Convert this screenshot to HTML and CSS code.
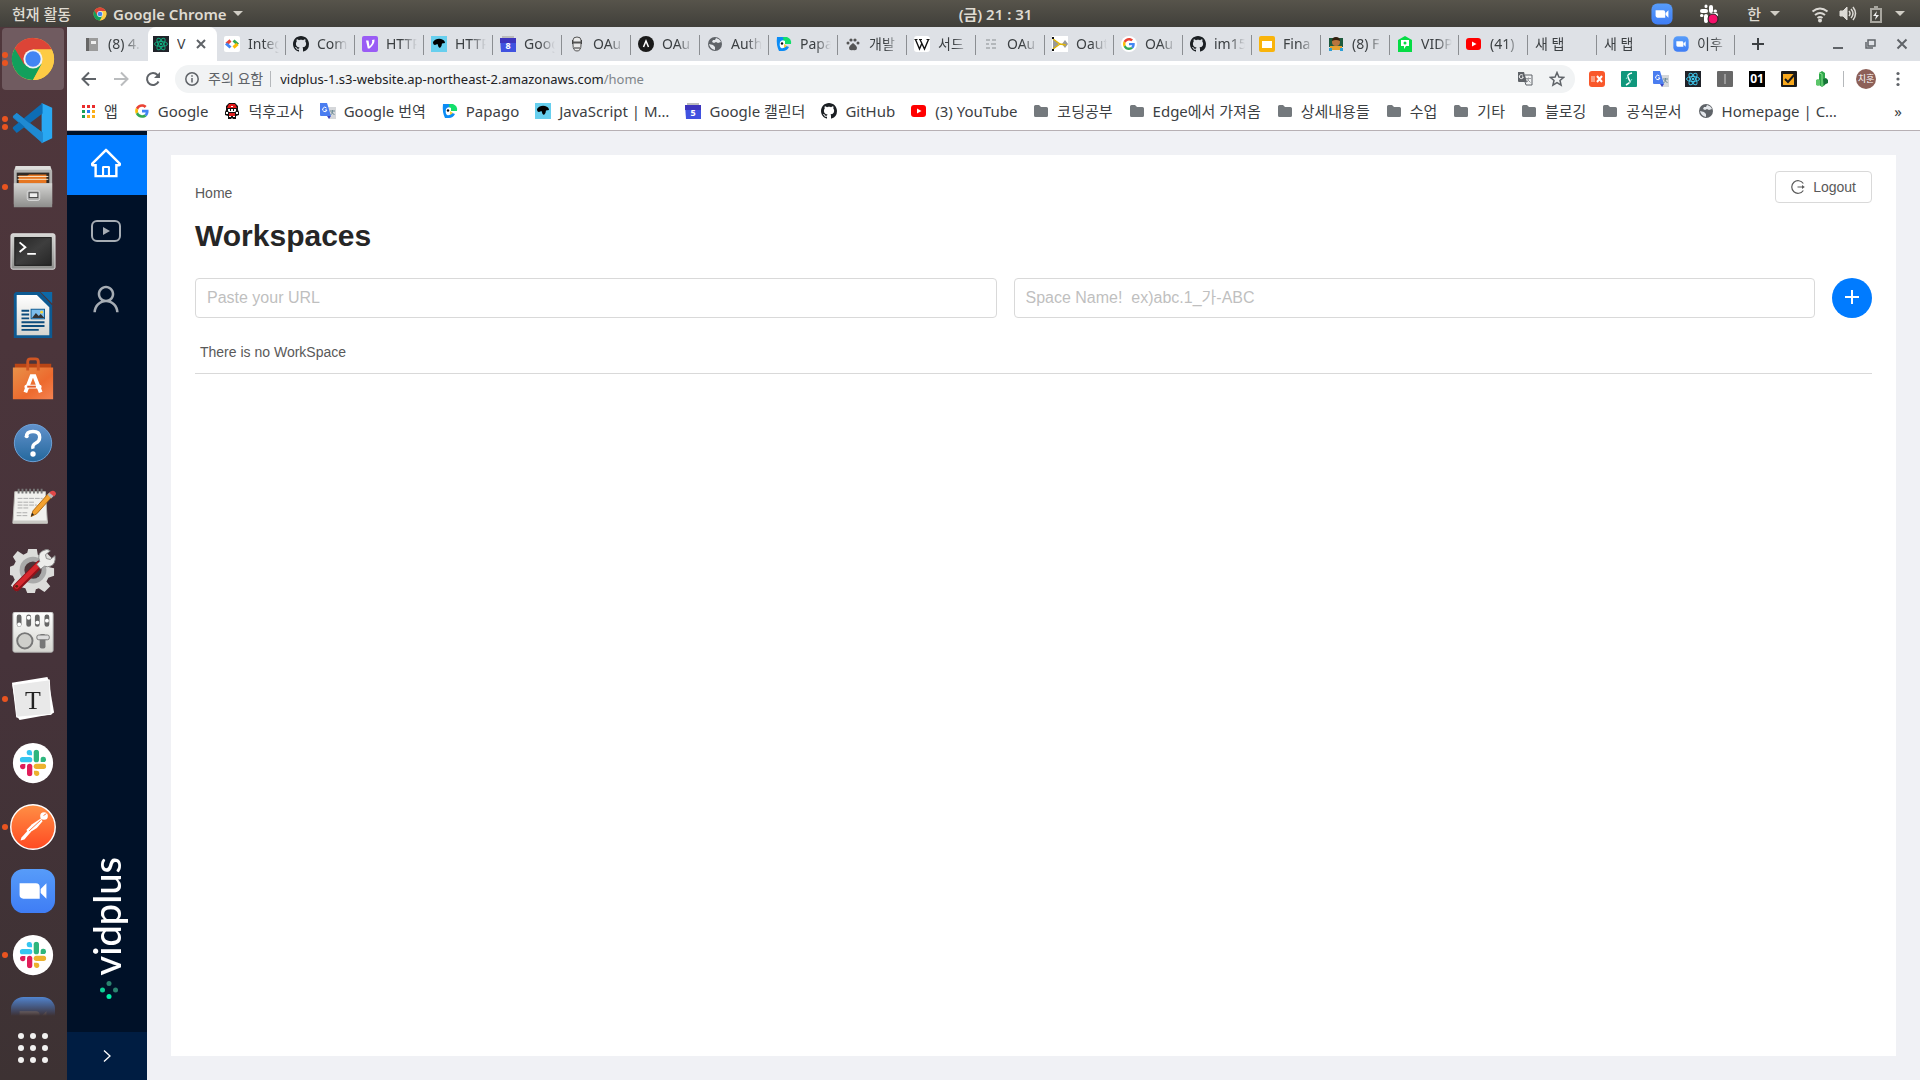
FILE: index.html
```html
<!DOCTYPE html>
<html lang="ko">
<head>
<meta charset="utf-8">
<meta name="viewport" content="width=device-width, initial-scale=1">
<title>Vidplus</title>
<link rel="stylesheet" href="styles.css">
</head>
<body>
<svg class="sprite" aria-hidden="true">
  <defs>
    <linearGradient id="g-zoom" x1="0" y1="0" x2="0" y2="1"><stop offset="0" stop-color="#579cf9"/><stop offset="1" stop-color="#3f7df5"/></linearGradient>
    <linearGradient id="g-postman" x1="0" y1="0" x2="0" y2="1"><stop offset="0" stop-color="#ff8f45"/><stop offset="1" stop-color="#ff4a22"/></linearGradient>
    <linearGradient id="g-metal" x1="0" y1="0" x2="0" y2="1"><stop offset="0" stop-color="#d6d6d4"/><stop offset="1" stop-color="#8e8e8c"/></linearGradient>
    <linearGradient id="g-paper" x1="0" y1="0" x2="0" y2="1"><stop offset="0" stop-color="#ffffff"/><stop offset="1" stop-color="#d5d5d0"/></linearGradient>
    <linearGradient id="g-bag" x1="0" y1="0" x2="1" y2="1"><stop offset="0" stop-color="#e89149"/><stop offset=".6" stop-color="#ed6a2e"/><stop offset="1" stop-color="#f58352"/></linearGradient>
    <linearGradient id="g-help" x1="0" y1="0" x2="0" y2="1"><stop offset="0" stop-color="#6292cc"/><stop offset="1" stop-color="#24689d"/></linearGradient>
    <linearGradient id="g-term" x1="0" y1="0" x2="1" y2="1"><stop offset="0" stop-color="#252525"/><stop offset=".5" stop-color="#3e3e3e"/><stop offset="1" stop-color="#262626"/></linearGradient>
  </defs>
  <symbol id="chrome" viewBox="0 0 48 48">
    <circle cx="24" cy="24" r="22" fill="#fdcb45"/>
    <path d="M24 24 4.900 13A22 22 0 0 0 24 46L33.500 29.500Z" fill="#12a05c"/>
    <path d="M24 14H43.600A22 22 0 0 0 4.900 13L15 30Z" fill="#dc4437"/>
    <path d="M24 14H43.600A22 22 0 0 1 24 46L33 29Z" fill="#fdcb45"/>
    <circle cx="24" cy="24" r="10" fill="#f2f2f2"/><circle cx="24" cy="24" r="8" fill="#4285f4"/>
  </symbol>
  <symbol id="vscode" viewBox="0 0 48 48">
    <path d="M33 3 44 8V40L33 45Z" fill="#29a8f2"/>
    <path d="M3 17 7 13.500 34 34V45L3 18.500Z" fill="#1b80c8"/>
    <path d="M3 30 7 34.500 34 14V3L3 28.500Z" fill="#0d6db4"/>
    <path d="M3 17 7 13.500 20 24 34 34V45Z" fill="#1f8ad2"/>
  </symbol>
  <symbol id="files" viewBox="0 0 48 48">
    <path d="M6 2H42L44 7V42H4V7Z" fill="#b3b3b1"/><path d="M6 2H42L43 6H5Z" fill="#dededc"/>
    <rect x="7" y="9" width="34" height="11" fill="#2f2b28"/><path d="M9 12h9l2-1h18v9H9Z" fill="#e57621"/><path d="M8 13h32M8 16h32" stroke="#f7e7cf"/>
    <path d="M4 20H44V45H4Z" fill="url(#g-metal)"/><rect x="18" y="28" width="13" height="10" rx="2" fill="#aaa" stroke="#ddd"/><rect x="20" y="30" width="9" height="5" fill="#eee" stroke="#444"/>
  </symbol>
  <symbol id="terminal" viewBox="0 0 48 48">
    <rect x="1" y="6" width="46" height="37" rx="2" fill="url(#g-metal)" stroke="#e0e0e0"/><rect x="5" y="10" width="38" height="29" fill="url(#g-term)" stroke="#1b1b1b"/>
    <path d="m10 15 6 5-6 5M18 27h9" fill="none" stroke="#fff" stroke-width="2"/>
  </symbol>
  <symbol id="writer" viewBox="0 0 48 48">
    <path d="M6 0H31L44 14V48H4V2Z" fill="#0d5a92"/><path d="M32 0H44V12Z" fill="#0d69a8"/>
    <path d="M7 3H28L41 16V45H7Z" fill="url(#g-paper)"/>
    <path d="M12 19.500h8m-8 4h8m-8 4h8m-8 4h24m-24 4h24m-24 4h18" stroke="#0d4c7c" stroke-width="2"/>
    <rect x="22" y="18" width="14" height="10" fill="#7cbdeb" stroke="#0d5a92"/><path d="m23 27 4-5 3 3 2-2 4 4Z" fill="#333"/><circle cx="33" cy="21" r="1.500" fill="#f5d33b"/>
  </symbol>
  <symbol id="software" viewBox="0 0 48 48">
    <path d="M5 8H43V14H5Z" fill="#b94515"/><path d="M3 12H45V45H3Z" fill="url(#g-bag)"/>
    <path d="M18.500 15V6q0-3 3-3h5q3 0 3 3v9" fill="none" stroke="#cf5624" stroke-width="3"/>
    <path d="M16 38 22.500 21h3L32 38" fill="none" stroke="#fff" stroke-width="4"/><rect x="15" y="30" width="18" height="4" rx="2" fill="#fff"/><path d="M18 32h9" stroke="#e35b25" stroke-width="2"/>
  </symbol>
  <symbol id="help" viewBox="0 0 48 48">
    <circle cx="24" cy="24" r="19.500" fill="url(#g-help)" stroke="#6fa3d8"/>
    <path d="M17 18q0-6 7-6t7 6q0 4-4 6t-3 6" fill="none" stroke="#fff" stroke-width="3.500"/><circle cx="17.500" cy="17" r="2" fill="#fff"/><circle cx="24" cy="35.500" r="2.800" fill="#fff"/>
  </symbol>
  <symbol id="notes" viewBox="0 0 48 48">
    <path d="M5 8H37L39 41H3Z" fill="#f1f1ee" stroke="#bdbdb8"/><path d="M3 38H39V41H3Z" fill="#c9c9c4"/>
    <path d="M9 5v5m4-5v5m4-5v5m4-5v5m4-5v5m4-5v5m4-5v5" stroke="#777" stroke-width="2"/>
    <path d="M8 15h26M8 19h18M8 22h20M8 25h12M7 30h12M7 33h12" stroke="#aaa" stroke-dasharray="5 1"/>
    <path d="m22 34 2-6L40 10l4 3-16 18Z" fill="#f3a22f" stroke="#b06a12"/><path d="m39 11 3-3 4 4-3 3Z" fill="#b8b8b8"/><path d="m42 8q3-2 5 0t0 4l-1 1-5-4Z" fill="#e04848"/><path d="m22 34 1-4 2 2Z" fill="#222"/>
  </symbol>
  <symbol id="settings" viewBox="0 1 48 48">
    <path d="m19 2h9l1 6 4 2 5-4 6 6-4 6 1 3 5 1v8l-6 2-2 4 4 5-6 6-6-4-3 1-1 4h-8l-2-5-4-1-5 4-6-6 4-6-2-4-4-1v-8l5-2 2-4-3-5 5-6 6 4 4-2Z" fill="#dcdcda"/>
    <circle cx="24" cy="24" r="14" fill="#aaa"/><circle cx="24" cy="24" r="9" fill="#4b3539"/>
    <path d="m7 42 24-24" stroke="#8f1219" stroke-width="8" stroke-linecap="round"/><path d="m7 41 23-23" stroke="#d6282e" stroke-width="5" stroke-linecap="round"/>
    <path d="m28 18 3-3q-3-8 3-11 5-3 8 0l-5 4 1 4 4 1 5-4q1 9-5 11-3 1-6 0l-4 3Z" fill="#ededeb" stroke="#888"/><circle cx="7" cy="41" r="1.500" fill="#521"/>
  </symbol>
  <symbol id="tweaks" viewBox="0 3 48 48" overflow="visible">
    <rect x="3" y="3" width="42" height="42" rx="2" fill="url(#g-paper)" stroke="#aaa"/>
    <path d="M9.500 8v8m10-8v8m9-8v8m10-8v8" stroke="#666" stroke-width="5" stroke-linecap="round"/>
    <path d="M9.500 16h.1m9.900-7h.1m8.900 5h.1m9.900-2h.1" stroke="#fff" stroke-width="4" stroke-linecap="round"/>
    <circle cx="15.500" cy="33" r="8" fill="#cfcfcb" stroke="#777" stroke-width="2"/><rect x="31" y="26" width="6" height="15" rx="2" fill="#777"/><rect x="28" y="27" width="13" height="5" rx="2" fill="#ddd" stroke="#777"/>
  </symbol>
  <symbol id="typora" viewBox="0 0 48 48">
    <path d="m2 7 37-6 1 3 6 34-3 2-33 6-2-3Z" fill="#fff"/><path d="M3 9 41 4 43 40 7 43Z" fill="#e9e9e9" stroke="#fff"/>
    <text x="24" y="34" text-anchor="middle" font-family="Liberation Serif, serif" font-size="27" fill="#222">T</text>
  </symbol>
  <symbol id="slack-mark" viewBox="0 0 28 28">
    <g stroke-width="5.500" stroke-linecap="round"><path d="M3 10.500h7.500" stroke="#36c5f0"/><path d="M17.500 3v7.500" stroke="#2eb67d"/><path d="M17.500 17.500H25" stroke="#ecb22e"/><path d="M10.500 17.500V25" stroke="#e01e5a"/></g>
    <path d="M13 6H10.500A2.800 2.800 0 1 1 13 3Z" fill="#36c5f0"/><path d="M22 13v-2.500A2.800 2.800 0 1 1 25 13Z" fill="#2eb67d"/><path d="M15 22h2.500A2.800 2.800 0 1 1 15 25Z" fill="#ecb22e"/><path d="M6 15v2.500A2.800 2.800 0 1 1 3 15Z" fill="#e01e5a"/>
  </symbol>
  <symbol id="slack" viewBox="0 0 48 48"><circle cx="24" cy="24" r="21" fill="#fff"/><use href="#slack-mark" x="10" y="10" width="28" height="28"/></symbol>
  <symbol id="postman" viewBox="0 0 48 48">
    <circle cx="24" cy="24" r="23.200" fill="url(#g-postman)" stroke="#fff" stroke-width="1.500"/>
    <circle cx="35.500" cy="12.500" r="4" fill="#fff"/><path d="m32 15-9 6-6 6 3 3 8-5 6-7Z" fill="#fff"/><path d="m19 27-7 8-1 3 4-1 7-8Z" fill="#fff"/><path d="m20 28 12-11" stroke="#ff7038"/><path d="m35 12 3-2" stroke="#ff7038"/>
  </symbol>
  <symbol id="zoom" viewBox="0 0 48 48">
    <rect x="1" y="1" width="46" height="46" rx="13" fill="url(#g-zoom)"/><path d="M10 16H27q4 0 4 4V32H14q-4 0-4-4ZM32 22l6-6V32l-6-6Z" fill="#fff"/>
  </symbol>
  <symbol id="github" viewBox="0 0 16 16"><path fill="#1b1f23" d="M8 0C3.580 0 0 3.580 0 8c0 3.540 2.290 6.530 5.470 7.590.4.070.55-.17.55-.38 0-.19-.01-.82-.01-1.490-2.010.37-2.530-.49-2.690-.94-.09-.23-.48-.94-.82-1.130-.28-.15-.68-.52-.01-.53.63-.01 1.080.58 1.230.82.72 1.210 1.870.87 2.330.66.07-.52.28-.87.51-1.070-1.780-.2-3.640-.89-3.640-3.950 0-.87.31-1.590.82-2.150-.08-.2-.36-1.020.08-2.120 0 0 .67-.21 2.200.82.64-.18 1.320-.27 2-.27s1.360.09 2 .27c1.530-1.040 2.200-.82 2.200-.82.44 1.100.16 1.920.08 2.120.51.56.82 1.270.82 2.150 0 3.070-1.870 3.750-3.650 3.950.29.25.54.73.54 1.480 0 1.070-.01 1.930-.01 2.200 0 .21.15.46.55.38A8.010 8.010 0 0 0 16 8c0-4.420-3.580-8-8-8z"/></symbol>
  <symbol id="google" viewBox="-4 -4 56 56">
    <path fill="#ea4335" d="M24 9.500c3.540 0 6.710 1.220 9.210 3.600l6.850-6.850C35.900 2.380 30.470 0 24 0 14.620 0 6.510 5.380 2.560 13.220l7.980 6.190C12.430 13.720 17.740 9.500 24 9.500z"/><path fill="#4285f4" d="M46.980 24.550c0-1.570-.15-3.090-.38-4.550H24v9.020h12.940c-.58 2.960-2.260 5.480-4.780 7.180l7.730 6c4.510-4.180 7.090-10.360 7.090-17.650z"/><path fill="#fbbc05" d="M10.530 28.590c-.48-1.450-.76-2.990-.76-4.590s.27-3.140.76-4.590l-7.980-6.190C.92 16.460 0 20.120 0 24c0 3.880.92 7.540 2.560 10.780l7.970-6.190z"/><path fill="#34a853" d="M24 48c6.480 0 11.930-2.130 15.890-5.810l-7.730-6c-2.150 1.450-4.920 2.300-8.160 2.300-6.260 0-11.570-4.220-13.470-9.910l-7.980 6.190C6.510 42.620 14.620 48 24 48z"/>
  </symbol>
  <symbol id="google-tab" viewBox="0 0 16 16"><circle cx="8" cy="8" r="8" fill="#fff"/><use href="#google" x="1" y="1" width="14" height="14"/></symbol>
  <symbol id="atom" viewBox="0 0 16 16"><g fill="none" stroke="currentColor"><ellipse cx="8" cy="8" rx="6.500" ry="2.500"/><ellipse cx="8" cy="8" rx="6.500" ry="2.500" transform="rotate(60 8 8)"/><ellipse cx="8" cy="8" rx="6.500" ry="2.500" transform="rotate(120 8 8)"/></g><circle cx="8" cy="8" r="1.300" fill="currentColor"/></symbol>
  <symbol id="book" viewBox="0 0 16 16"><path d="M2 2h12v13H2Z" fill="#9b9b9b"/><path d="M2 2h3v13H2Z" fill="#666"/><path d="M7 5h5v3H7Z" fill="#eee"/></symbol>
  <symbol id="codecolor" viewBox="0 0 16 16"><rect width="16" height="16" rx="2" fill="#fff"/><path d="m6.500 4.500-4 3.500" stroke="#ea4335" stroke-width="3"/><path d="m2 7.500 4.500 4" stroke="#4285f4" stroke-width="3"/><path d="m9.500 4.500 4.500 4" stroke="#34a853" stroke-width="3"/><path d="m13.500 8-4 3.500" stroke="#fbbc05" stroke-width="3"/></symbol>
  <symbol id="velog" viewBox="0 0 16 16"><rect width="16" height="16" rx="2" fill="#9a5cf5"/><path d="M4 4.500h2.500l1 6Q11 7 10 4l2.500-.5Q13 8 7.500 12.500H5.800Z" fill="#fff"/></symbol>
  <symbol id="mdn" viewBox="0 0 16 16"><rect width="16" height="16" fill="#67cfee"/><path d="M2 6q3-4 8-3 4 1 4 4l-3 .5Q11 10 9 12q-2-1-2.500-4L4 9Q2 9 2 6Z" fill="#000"/></symbol>
  <symbol id="cal" viewBox="0 0 16 16"><path d="M2 0h12v2H2Z" fill="#bcbcbc"/><path d="M0 2h16v14H1Z" fill="#4052e0"/><path d="M0 2h16v5H0Z" fill="#3d35bd"/></symbol>
  <symbol id="robot" viewBox="0 0 16 16"><path d="M4 6V4q0-3 4-3t4 3v5q0 6-4 6T4 9Z" fill="#e9e9e9" stroke="#555"/><path d="M3 4h1v4H3Zm9 0h1v4h-1Z" fill="#444"/><path d="M4 6.500h8" stroke="#555" stroke-width="2"/><path d="M5 12h6" stroke="#333"/></symbol>
  <symbol id="authlete" viewBox="0 0 16 16"><circle cx="8" cy="8" r="8" fill="#1a1a1a"/><path d="m5.500 11 2.500-6 2.500 6" fill="none" stroke="#fff" stroke-width="1.500"/></symbol>
  <symbol id="globe" viewBox="0 0 16 16"><circle cx="8" cy="8" r="7" fill="#5f6368"/><path d="m2 8 4 1 2 2v3Q3 13 2 8ZM9 2q4 1 5 4l-3 1-2-1-2 1-2-1 1-2h2Z" fill="#e4e7eb"/></symbol>
  <symbol id="papago" viewBox="0 0 16 16"><path d="M1 1h7v8l5 2q-2 4-6 4H3Q0 9 1 1Z" fill="#0c8cf5"/><path d="M7 1h4q5 2 4 7H8Z" fill="#13df6b"/><path d="M4 6q2-3 5-1v5q-1 3-4 2-2-2-1-6" fill="#fff"/><circle cx="6" cy="7.500" r="1.200" fill="#111"/><path d="m8 8 3 2-3 2Z" fill="#fc3"/></symbol>
  <symbol id="paw" viewBox="0 0 16 16"><path d="M8 7q4 3 4 5 0 3-4 2-4 1-4-2 0-2 4-5" fill="#555"/><g fill="#555"><circle cx="3" cy="7" r="1.500"/><circle cx="6" cy="4" r="1.600"/><circle cx="10" cy="4" r="1.600"/><circle cx="13" cy="7" r="1.500"/></g></symbol>
  <symbol id="wiki" viewBox="0 0 16 16"><rect width="16" height="16" rx="3" fill="#fff"/><path d="m1.500 3.500 4 9.500 2.500-6m-2-3.500L10.500 13l4-9.500" fill="none" stroke="#111" stroke-width="1.400"/><path d="M.5 3.500h3m1.500 0h3m4.500 0h3" stroke="#111"/></symbol>
  <symbol id="lines" viewBox="0 0 16 16"><path d="M3 4h4m2 0h4M3 8h3m2 0h5M3 12h4m2 0h4" stroke="#a5a9ad" stroke-width="1.500"/></symbol>
  <symbol id="bow" viewBox="0 0 16 16"><rect width="16" height="16" fill="#fff"/><path d="M1 2 7 8 1 14Zm9 6 3-4 3 4-3 4Z" fill="#999"/><path d="m1 3 7 5 6 1M1 13l7-5" fill="none" stroke="#e0b50a" stroke-width="1.500"/><path d="M0 1h2v2H0ZM0 13h2v2H0Z" fill="#111"/></symbol>
  <symbol id="slides" viewBox="0 0 16 16"><rect width="16" height="16" rx="2" fill="#f9b40b"/><rect x="3" y="5" width="10" height="7" fill="#fff"/></symbol>
  <symbol id="coder" viewBox="0 0 16 16"><path d="M1 2h14v9H1Z" fill="#1d5a3d"/><circle cx="8" cy="6" r="4" fill="#b8743c"/><path d="M4 5q0-4 4-4t4 4Q8 3 4 5" fill="#35200f"/><path d="M2 10h12v4H2Z" fill="#e2a12f"/><path d="M1 12h3v3H1Zm11 0h3v3h-3Z" fill="#2a9fd6"/></symbol>
  <symbol id="pin" viewBox="0 0 16 16"><path d="M1 4 8 0l7 4v12H1Z" fill="#06dc45"/><path d="M4 4h8v6H9l-2 3V10H4Z" fill="#fff"/><circle cx="8" cy="7" r="1.500" fill="#06dc45"/></symbol>
  <symbol id="youtube" viewBox="0 0 16 16"><rect x="0" y="2" width="15" height="12" rx="3" fill="#f00"/><path d="m6 5.500 4.500 2.500L6 10.500Z" fill="#fff"/></symbol>
  <symbol id="trainer" viewBox="0 0 16 16"><path d="M5 0h6l3 3v4l1 2v3l-3 1v3H9l-1-1-1 1H4v-3l-3-1V9l1-2V3Z" fill="#111"/><path d="M5 1h6l2 4H3Z" fill="#e51a1a"/><path d="M4 6h8v2l-1 1H5L4 8Z" fill="#fff"/><path d="M6 6h1v2H6Zm3 0h1v2H9Z" fill="#111"/><path d="M5 10h6v3H5Z" fill="#d22"/><path d="M2 9h2v2H2Zm10 0h2v2h-2ZM7 3h2v1H7ZM5 13h2v1H5Zm4 0h2v1H9Z" fill="#fff"/></symbol>
  <symbol id="translate" viewBox="0 0 16 16"><path d="M7 4h9v12H9Z" fill="#d5d7da"/><path d="M0 0h7l4 13H1q-1 0-1-1Z" fill="#4a7df0"/><path d="M7 13h4l-2 3Z" fill="#3b46c4"/><path d="M6.500 5A2.200 2.200 0 1 0 7 7H5" fill="none" stroke="#fff"/><path d="M10 8h5m-2.500-1v1q0 3-2 4m1-3 3 3" fill="none" stroke="#6d8b96"/></symbol>
  <symbol id="folder" viewBox="0 0 16 16"><path d="M1 3.500Q1 2 2.500 2H6l2 2h5.500Q15 4 15 5.500v7q0 1.500-1.500 1.500h-11Q1 14 1 12.500Z" fill="#74797d"/></symbol>
  <symbol id="apps" viewBox="0 0 16 16"><path d="M2 2h3v3H2Zm5 0h3v3H7Zm5 0h3v3h-3Z" fill="#ea2c2c"/><path d="M2 7h3v3H2Z" fill="#19a157"/><path d="M7 7h3v3H7Z" fill="#2a7df5"/><path d="M12 7h3v3h-3ZM12 12h3v3h-3ZM7 12h3v3H7Z" fill="#fbae17"/><path d="M2 12h3v3H2Z" fill="#19a157"/></symbol>
</svg>

<header class="topbar">
  <button class="activities">현재 활동</button>
  <button class="app-menu"><svg class="i14"><use href="#chrome"/></svg>Google Chrome<span class="caret"></span></button>
  <time class="clock">(금) 21 : 31</time>
  <div class="tray">
    <svg class="i22"><use href="#zoom"/></svg>
    <svg class="i22 tray-slack" viewBox="0 0 22 22"><g stroke="#fff" stroke-width="4" stroke-linecap="round"><path d="M4 8h4M13 4v4M14 12h4M8 13v5"/></g><path d="M8 3v.5m9 4.500h.5M3.500 12.500H4" stroke="#fff" stroke-width="3" stroke-linecap="round"/><circle cx="15" cy="16" r="5" fill="#f5106a" stroke="#222"/></svg>
    <button class="ime">한<span class="caret"></span></button>
    <div class="status">
      <svg class="i18" viewBox="0 0 18 18" fill="none" stroke="#dcdad5" stroke-width="2"><path d="M1.500 6.500q7.500-6 15 0M4 10q5-4 10 0M6.500 13q2.500-2 5 0"/><circle cx="9" cy="15.500" r="1" fill="#dcdad5"/></svg>
      <svg class="i18" viewBox="0 0 18 18" fill="none" stroke="#dcdad5"><path d="M1 6h3l4-4v13l-4-4H1Z" fill="#dcdad5"/><path d="M10 6q2 2.500 0 5M12 4q4 4.500 0 9M14 2q5 6.500 0 13" stroke-width="1.500"/></svg>
      <svg class="i18" viewBox="0 0 18 18" fill="none" stroke="#a8a69f" stroke-width="2"><path d="M4 4h10v13H4ZM7 2h4"/><path d="m10 6-4 5h3l-1 4 4-5H9Z" fill="#eee" stroke="none"/></svg>
      <span class="caret"></span>
    </div>
  </div>
</header>

<div class="desktop">
  <nav class="dock" aria-label="Dock">
    <div class="dock-list">
      <button class="dock-item current two" aria-label="Chrome"><svg><use href="#chrome"/></svg></button>
      <button class="dock-item two" aria-label="Code"><svg><use href="#vscode"/></svg></button>
      <button class="dock-item one" aria-label="Files"><svg><use href="#files"/></svg></button>
      <button class="dock-item" aria-label="Terminal"><svg><use href="#terminal"/></svg></button>
      <button class="dock-item" aria-label="Writer"><svg><use href="#writer"/></svg></button>
      <button class="dock-item" aria-label="Software"><svg><use href="#software"/></svg></button>
      <button class="dock-item" aria-label="Help"><svg><use href="#help"/></svg></button>
      <button class="dock-item" aria-label="Notes"><svg><use href="#notes"/></svg></button>
      <button class="dock-item" aria-label="Settings"><svg><use href="#settings"/></svg></button>
      <button class="dock-item" aria-label="Tweaks"><svg><use href="#tweaks"/></svg></button>
      <button class="dock-item one" aria-label="Typora"><svg><use href="#typora"/></svg></button>
      <button class="dock-item" aria-label="Slack"><svg><use href="#slack"/></svg></button>
      <button class="dock-item one" aria-label="Postman"><svg><use href="#postman"/></svg></button>
      <button class="dock-item" aria-label="Zoom"><svg><use href="#zoom"/></svg></button>
      <button class="dock-item one" aria-label="Slack"><svg><use href="#slack"/></svg></button>
      <button class="dock-item" aria-label="Zoom"><svg><use href="#zoom"/></svg></button>
    </div>
    <button class="show-apps" aria-label="Show applications"><svg viewBox="0 0 32 32" fill="#f2f1f0"><circle cx="4" cy="4" r="3"/><circle cx="16" cy="4" r="3"/><circle cx="28" cy="4" r="3"/><circle cx="4" cy="16" r="3"/><circle cx="16" cy="16" r="3"/><circle cx="28" cy="16" r="3"/><circle cx="4" cy="28" r="3"/><circle cx="16" cy="28" r="3"/><circle cx="28" cy="28" r="3"/></svg></button>
  </nav>

  <div class="browser">
    <div class="tabstrip">
      <button class="tab plain"><svg class="i16"><use href="#book"/></svg><span>(8) 4.</span></button>
      <button class="tab active"><svg class="i16 react"><use href="#atom"/></svg><span>V</span><svg class="close" viewBox="0 0 10 10"><path d="m1 1 8 8M9 1 1 9" stroke="#5f6368" stroke-width="2"/></svg></button>
      <button class="tab"><svg class="i16"><use href="#codecolor"/></svg><span>Integ</span></button>
      <button class="tab"><svg class="i16"><use href="#github"/></svg><span>Com</span></button>
      <button class="tab"><svg class="i16"><use href="#velog"/></svg><span>HTTP</span></button>
      <button class="tab"><svg class="i16"><use href="#mdn"/></svg><span>HTTP</span></button>
      <button class="tab"><svg class="i16"><use href="#cal"/><text class="day" x="8" y="13">8</text></svg><span>Goog</span></button>
      <button class="tab"><svg class="i16"><use href="#robot"/></svg><span>OAu</span></button>
      <button class="tab"><svg class="i16"><use href="#authlete"/></svg><span>OAu</span></button>
      <button class="tab"><svg class="i16"><use href="#globe"/></svg><span>Auth</span></button>
      <button class="tab"><svg class="i16"><use href="#papago"/></svg><span>Papa</span></button>
      <button class="tab"><svg class="i16"><use href="#paw"/></svg><span>개발</span></button>
      <button class="tab"><svg class="i16"><use href="#wiki"/></svg><span>서드</span></button>
      <button class="tab"><svg class="i16"><use href="#lines"/></svg><span>OAu</span></button>
      <button class="tab"><svg class="i16"><use href="#bow"/></svg><span>Oaut</span></button>
      <button class="tab"><svg class="i16"><use href="#google-tab"/></svg><span>OAu</span></button>
      <button class="tab"><svg class="i16"><use href="#github"/></svg><span>im15</span></button>
      <button class="tab"><svg class="i16"><use href="#slides"/></svg><span>Fina</span></button>
      <button class="tab"><svg class="i16"><use href="#coder"/></svg><span>(8) F</span></button>
      <button class="tab"><svg class="i16"><use href="#pin"/></svg><span>VIDP</span></button>
      <button class="tab"><svg class="i16"><use href="#youtube"/></svg><span>(41)</span></button>
      <button class="tab"><span>새 탭</span></button>
      <button class="tab"><span>새 탭</span></button>
      <button class="tab"><svg class="i16"><use href="#zoom"/></svg><span>이후</span></button>
      <button class="new-tab" aria-label="New tab"><svg class="i12" viewBox="0 0 12 12"><path d="M6 0v12M0 6h12" stroke="#3c4043" stroke-width="2"/></svg></button>
      <div class="window-controls">
        <button aria-label="Minimize"><svg class="i12" viewBox="0 0 12 12"><path d="M1 10h10" stroke="#5f6368" stroke-width="2"/></svg></button>
        <button aria-label="Restore"><svg class="i12" viewBox="0 0 12 12" fill="none" stroke="#5f6368" stroke-width="1.500"><path d="M4 2h7v6H4ZM2 4v6h7"/></svg></button>
        <button aria-label="Close"><svg class="i12" viewBox="0 0 12 12"><path d="m1.500 1.500 9 9m0-9-9 9" stroke="#5f6368" stroke-width="2"/></svg></button>
      </div>
    </div>

    <div class="toolbar">
      <button aria-label="Back"><svg class="i16" viewBox="0 0 16 16" fill="none" stroke="#5f6368" stroke-width="2"><path d="M15 8H2m6-6.500L1.500 8 8 14.500"/></svg></button>
      <button aria-label="Forward"><svg class="i16" viewBox="0 0 16 16" fill="none" stroke="#babcbe" stroke-width="2"><path d="M1 8h13M8 1.500 14.500 8 8 14.500"/></svg></button>
      <button aria-label="Reload"><svg class="i16" viewBox="0 0 16 16" fill="none" stroke="#5f6368" stroke-width="2"><path d="M13.500 10.500A6 6 0 1 1 12.500 4L14 5.500"/><path d="M15 1v6H9Z" fill="#5f6368" stroke="none"/></svg></button>
      <div class="omnibox">
        <svg class="i14" viewBox="0 0 14 14" fill="none" stroke="#5f6368" stroke-width="1.500"><circle cx="7" cy="7" r="6.200"/><path d="M7 6v4.500M7 3.200v1.500"/></svg>
        <span class="warning">주의 요함</span>
        <span class="rule"></span>
        <input class="url" aria-label="Address" value="vidplus-1.s3-website.ap-northeast-2.amazonaws.com"><span class="path">/home</span>
        <span class="omni-actions">
          <svg class="i16" viewBox="0 0 16 16"><path d="M1 1h6l3 10H2q-1 0-1-1Z" fill="#5f6368"/><path d="M8 4h7v10H9l-1-3" fill="none" stroke="#5f6368"/><path d="M9 7.500h5m-2.500-1v1q0 3-2 4m1-3 3 3" fill="none" stroke="#9a9da1"/><path d="M6 4.500A2 2 0 1 0 6.300 6H5" fill="none" stroke="#fff"/></svg>
          <svg class="i16" viewBox="0 0 16 16"><path d="m8 1.500 1.900 4.500 4.700.4-3.600 3.100 1.100 4.700L8 11.700l-4.100 2.500L5 9.500 1.400 6.400 6.100 6Z" fill="none" stroke="#5f6368" stroke-width="1.500"/></svg>
        </span>
      </div>
      <div class="extensions">
        <svg class="i16" viewBox="0 0 16 16"><rect width="16" height="16" rx="3" fill="#f9582b"/><path d="M3 5v6M5 5v6" stroke="#fcb39a" stroke-width="1.500"/><path d="m8 5 5 6m0-6-5 6" stroke="#fff" stroke-width="2"/></svg>
        <svg class="i16" viewBox="0 0 16 16"><rect width="16" height="16" rx="1" fill="#10977c"/><path d="M11 2Q6 3 7 6t2 4-4 4" fill="none" stroke="#fff" stroke-width="1.500"/><path d="m5 8 3-4M8 12l3-4" stroke="#7ee0cb"/></svg>
        <svg class="i16"><use href="#translate"/></svg>
        <svg class="i16 react-blue"><use href="#atom"/></svg>
        <svg class="i16" viewBox="0 0 16 16"><rect width="16" height="16" rx="1" fill="#686868"/><path d="M8 3v10" stroke="#ccc"/></svg>
        <svg class="i16" viewBox="0 0 16 16"><rect width="16" height="16" fill="#000"/><text class="badge-01" x="8" y="12">01</text></svg>
        <svg class="i16" viewBox="0 0 16 16"><rect width="16" height="16" rx="1" fill="#1a1a1a"/><rect x="2" y="3" width="11" height="11" fill="#f8a81c"/><path d="m4 8 3 3 7-8" fill="none" stroke="#1a1a1a" stroke-width="2"/></svg>
        <svg class="i16" viewBox="0 0 16 16"><path d="m6 2 3-2 3 2v12l-3 2-3-2Z" fill="#2fa84b"/><path d="m3 9 2-1 2 1v5l-2 1-2-1Z" fill="#5cc56a"/><path d="M10 8l3-1 2 2v3l-4 2Z" fill="#167238"/><path d="m6 2 3 1v12" stroke="#8be08f" fill="none"/></svg>
        <span class="rule"></span>
        <button class="avatar">치훈</button>
        <button class="more" aria-label="Menu"><svg class="i16" viewBox="0 0 16 16" fill="#5f6368"><circle cx="8" cy="2.500" r="1.600"/><circle cx="8" cy="8" r="1.600"/><circle cx="8" cy="13.500" r="1.600"/></svg></button>
      </div>
    </div>

    <nav class="bookmarks" aria-label="Bookmarks">
      <a href="#"><svg class="i16"><use href="#apps"/></svg>앱</a>
      <a href="#"><svg class="i16"><use href="#google"/></svg>Google</a>
      <a href="#"><svg class="i16"><use href="#trainer"/></svg>덕후고사</a>
      <a href="#"><svg class="i16"><use href="#translate"/></svg>Google 번역</a>
      <a href="#"><svg class="i16"><use href="#papago"/></svg>Papago</a>
      <a href="#"><svg class="i16"><use href="#mdn"/></svg>JavaScript | M…</a>
      <a href="#"><svg class="i16"><use href="#cal"/><text class="day" x="8" y="13">5</text></svg>Google 캘린더</a>
      <a href="#"><svg class="i16"><use href="#github"/></svg>GitHub</a>
      <a href="#"><svg class="i16"><use href="#youtube"/></svg>(3) YouTube</a>
      <a href="#"><svg class="i16"><use href="#folder"/></svg>코딩공부</a>
      <a href="#"><svg class="i16"><use href="#folder"/></svg>Edge에서 가져옴</a>
      <a href="#"><svg class="i16"><use href="#folder"/></svg>상세내용들</a>
      <a href="#"><svg class="i16"><use href="#folder"/></svg>수업</a>
      <a href="#"><svg class="i16"><use href="#folder"/></svg>기타</a>
      <a href="#"><svg class="i16"><use href="#folder"/></svg>블로깅</a>
      <a href="#"><svg class="i16"><use href="#folder"/></svg>공식문서</a>
      <a href="#"><svg class="i16"><use href="#globe"/></svg>Homepage | C…</a>
      <button class="overflow">»</button>
    </nav>

    <div class="app">
      <aside class="sider">
        <nav class="menu" aria-label="Main">
          <a class="menu-item selected" href="#" aria-label="Home"><svg viewBox="64 64 896 896" fill="currentColor"><path d="M946.500 505L560.100 118.800l-25.900-25.900a31.500 31.500 0 0 0-44.400 0L77.500 505a63.900 63.900 0 0 0-18.800 46c.4 35.200 29.700 63.300 64.900 63.300h42.500V940h691.800V614.300h43.400c17.100 0 33.200-6.700 45.300-18.800a63.600 63.600 0 0 0 18.700-45.300c0-17-6.700-33.100-18.800-45.200zM568 868H456V664h112v204zm217.900-325.700V868H632V640c0-22.100-17.900-40-40-40H432c-22.100 0-40 17.900-40 40v228H238.100V542.300h-96l370-369.700 23.100 23.100L882 542.300h-96.100z"/></svg></a>
          <a class="menu-item" href="#" aria-label="Videos"><svg viewBox="0 0 30 30" fill="none" stroke="currentColor" stroke-width="2"><rect x="1" y="5" width="28" height="20" rx="5"/><path d="m12 11 7 4-7 4Z" fill="currentColor" stroke="none"/></svg></a>
          <a class="menu-item" href="#" aria-label="Profile"><svg viewBox="64 64 896 896" fill="currentColor"><path d="M858.500 763.600a374 374 0 0 0-80.600-119.500 375.630 375.630 0 0 0-119.500-80.600c-.4-.2-.8-.3-1.200-.5C719.500 518 760 444.700 760 362c0-137-111-248-248-248S264 225 264 362c0 82.700 40.500 156 102.800 201.100-.4.2-.8.3-1.200.5-44.800 18.900-85 46-119.500 80.600a375.630 375.630 0 0 0-80.600 119.500A371.700 371.700 0 0 0 136 901.800a8 8 0 0 0 8 8.200h60c4.400 0 7.900-3.500 8-7.800 2-77.200 33-149.500 87.800-204.300 56.700-56.700 132-87.900 212.200-87.900s155.500 31.200 212.200 87.900C779 752.700 810 825 812 902.200c.1 4.400 3.600 7.800 8 7.800h60a8 8 0 0 0 8-8.200c-1-47.800-10.900-94.300-29.500-138.200zM512 534c-45.900 0-89.100-17.900-121.600-50.400S340 407.900 340 362c0-45.900 17.900-89.100 50.400-121.600S466.100 190 512 190s89.100 17.900 121.600 50.400S684 316.100 684 362c0 45.900-17.900 89.100-50.400 121.600S557.900 534 512 534z"/></svg></a>
        </nav>
        <div class="logo">
          <span class="logo-text">vidplus</span>
          <svg class="i18" viewBox="0 0 18 18"><circle cx="9" cy="2.500" r="2.500" fill="#2b846f"/><circle cx="2.500" cy="9" r="2.500" fill="#0fcf95"/><circle cx="15.500" cy="9" r="2.500" fill="#2b846f"/><circle cx="9" cy="15.500" r="2.500" fill="#00f0a8"/></svg>
        </div>
        <button class="trigger" aria-label="Expand"><svg class="i14" viewBox="0 0 14 14"><path d="m4 1.500 6 5.500-6 5.500" fill="none" stroke="#fff" stroke-width="1.300"/></svg></button>
      </aside>
      <main class="content">
        <section class="card">
          <div class="card-head">
            <a class="crumb" href="#">Home</a>
            <button class="logout"><svg class="i14" viewBox="0 0 14 14" fill="none" stroke="currentColor" stroke-width="1.200"><path d="M12.300 3.500a6.300 6.300 0 1 0 0 7M6.500 7H12"/><path d="m11 5 2.800 2L11 9Z" fill="currentColor" stroke="none"/></svg>Logout</button>
          </div>
          <h1>Workspaces</h1>
          <form class="add-form">
            <input type="text" aria-label="URL" placeholder="Paste your URL">
            <input type="text" aria-label="Space name" placeholder="Space Name!&nbsp; ex)abc.1_가-ABC">
            <button class="add" type="button" aria-label="Add"><svg class="i14" viewBox="0 0 14 14"><path d="M7 0v14M0 7h14" stroke="#fff" stroke-width="2"/></svg></button>
          </form>
          <p class="empty">There is no WorkSpace</p>
        </section>
      </main>
    </div>
  </div>
</div>
</body>
</html>
```
FILE: styles.css
```css
* { box-sizing: border-box; }

body {
  margin: 0;
  height: 100vh;
  display: flex;
  flex-direction: column;
  overflow: hidden;
  font: 14px/20px "Noto Sans", "Noto Sans CJK KR", sans-serif;
  color: #3c4043;
}

button {
  margin: 0;
  padding: 0;
  border: 0;
  background: none;
  font: inherit;
  color: inherit;
  display: flex;
  align-items: center;
}

a { color: inherit; text-decoration: none; }
svg { display: block; flex: none; }
.sprite { position: absolute; width: 0; height: 0; }

.i12 { width: 12px; height: 12px; }
.i14 { width: 14px; height: 14px; }
.i16 { width: 16px; height: 16px; }
.i18 { width: 18px; height: 18px; }
.i22 { width: 22px; height: 22px; }

/* System bar */
.topbar {
  flex: none;
  height: 27px;
  display: grid;
  grid-template-columns: auto 1fr auto 1fr;
  align-items: center;
  background: linear-gradient(#57544b, #403f3a);
  color: #dfdbd2;
  font-size: 15px;
  font-weight: 500;
  white-space: nowrap;
}
.activities { padding-left: 12px; }
.app-menu { padding-left: 22px; gap: 6px; font-weight: 600; }
.clock { font-weight: 600; }
.caret {
  border: 5px solid transparent;
  border-top-color: #d0cdc5;
  border-bottom: 0;
}
.tray { display: flex; align-items: center; justify-content: flex-end; padding-right: 15px; }
.tray-slack { margin-left: 25px; }
.ime { gap: 9px; margin: 0 31px 0 27px; }
.status { display: flex; align-items: center; gap: 10px; }

/* Dock */
.desktop { flex: 1; min-height: 0; display: flex; }
.dock {
  flex: none;
  width: 67px;
  display: flex;
  flex-direction: column;
  background: linear-gradient(#50373c, #46333a 60%, #3d3233);
}
.dock-list {
  flex: 1;
  min-height: 0;
  overflow: hidden;
  mask-image: linear-gradient(#000 calc(100% - 24px), transparent);
}
.dock-item {
  position: relative;
  width: 62px;
  height: 62px;
  margin: 1px 2px 2px;
  border-radius: 4px;
  justify-content: center;
}
.dock-item svg { width: 46px; height: 46px; }
.dock-item.current { background: #705b60; }
.dock-item.one::before,
.dock-item.two::before,
.dock-item.two::after {
  content: "";
  position: absolute;
  left: 0;
  top: 28px;
  width: 6px;
  height: 6px;
  border-radius: 50%;
  background: #e95420;
}
.dock-item.two::before { top: 24px; }
.dock-item.two::after { top: 32px; }
.show-apps { flex: none; height: 64px; padding-right: 2px; justify-content: center; }
.show-apps svg { width: 32px; height: 32px; }

/* Browser chrome */
.browser { flex: 1; min-width: 0; display: flex; flex-direction: column; background: #fff; }
.tabstrip {
  flex: none;
  height: 34px;
  display: flex;
  align-items: stretch;
  padding-left: 12px;
  background: #dee1e6;
}
.tab {
  position: relative;
  flex: 0 1 69px;
  min-width: 0;
  gap: 8px;
  padding: 0 7px;
}
.tab.plain,
.tab.active { padding-left: 5px; }
.tab span {
  flex: 1;
  min-width: 0;
  overflow: hidden;
  text-align: left;
  white-space: nowrap;
  mask-image: linear-gradient(90deg, #000 50%, transparent);
}
.tab:not(.plain):not(.active)::after {
  content: "";
  position: absolute;
  right: 0;
  top: 8px;
  width: 1px;
  height: 20px;
  background: #8b8e92;
}
.tab.active { background: #fff; border-radius: 8px 8px 0 0; }
.tab.active span { mask-image: none; }
.close { width: 10px; height: 10px; margin-right: 4px; }
.react { background: #20232a; color: #12a87c; }
.react-blue { background: #20232a; color: #3fc3e8; }
.day { font: 700 9px "Noto Sans", sans-serif; fill: #fff; text-anchor: middle; }
.badge-01 { font: 700 12px "Noto Sans", sans-serif; fill: #fff; text-anchor: middle; }
.new-tab { padding: 0 17px; }
.window-controls { margin-left: auto; display: flex; gap: 20px; padding-right: 12px; }

.toolbar {
  flex: none;
  height: 35px;
  display: flex;
  align-items: center;
  gap: 16px;
  padding: 0 14px;
}
.omnibox {
  flex: 1;
  min-width: 0;
  height: 28px;
  margin: 0 -2px;
  padding: 0 10px;
  display: flex;
  align-items: center;
  border-radius: 14px;
  background: #f1f3f4;
}
.warning { margin: 0 7px 0 9px; color: #5f6368; white-space: nowrap; }
.rule { width: 1px; height: 16px; background: #b5b8bb; }
.url {
  field-sizing: content;
  margin-left: 9px;
  padding: 0;
  border: 0;
  background: none;
  font: inherit;
  font-size: 13px;
  color: #202124;
}
.path { font-size: 13px; color: #80868b; }
.omni-actions { margin-left: auto; display: flex; gap: 16px; }
.extensions { display: flex; align-items: center; gap: 16px; }
.extensions .rule { margin: 0 -4px 0 -2px; }
.avatar {
  width: 20px;
  height: 20px;
  border-radius: 50%;
  background: #8d6058;
  color: #fff;
  font-size: 9px;
  justify-content: center;
}
.more { margin-left: -2px; }

.bookmarks {
  flex: none;
  height: 35px;
  display: flex;
  align-items: center;
  gap: 16px;
  padding: 0 18px 4px 13px;
  border-bottom: 1px solid #b7b0b4;
  font-size: 15px;
  white-space: nowrap;
}
.bookmarks a { display: flex; align-items: center; gap: 8px; }
.overflow { margin-left: auto; }

/* Application */
.app {
  flex: 1;
  min-height: 0;
  display: flex;
  font: 14px/22px "Liberation Sans", "Noto Sans CJK KR", sans-serif;
  color: #595959;
}
.sider {
  flex: none;
  width: 80px;
  display: flex;
  flex-direction: column;
  background: #001128;
}
.menu { display: flex; flex-direction: column; gap: 8px; padding-top: 4px; }
.menu-item {
  height: 60px;
  padding: 0 2px 4px 0;
  display: flex;
  align-items: center;
  justify-content: center;
  color: #a6adb4;
}
.menu-item svg { width: 30px; height: 30px; }
.menu-item.selected { background: #007bff; color: #fff; }
.logo {
  margin-top: auto;
  margin-bottom: 33px;
  padding-left: 4px;
  display: flex;
  flex-direction: column;
  align-items: center;
  gap: 5px;
}
.logo-text {
  writing-mode: vertical-rl;
  transform: rotate(180deg);
  margin-right: 6px;
  font: 500 38px/40px Lato, sans-serif;
  color: #fff;
}
.trigger { height: 48px; justify-content: center; background: #001d42; }

.content { flex: 1; min-width: 0; display: flex; padding: 24px; background: #f0f1f5; }
.card { flex: 1; min-width: 0; padding: 16px 24px; background: #fff; }
.card-head { display: flex; justify-content: space-between; align-items: flex-start; }
.crumb { margin-top: 11px; }
.logout {
  height: 32px;
  gap: 8px;
  padding: 0 15px;
  border: 1px solid #d9d9d9;
  border-radius: 4px;
}
h1 { margin: 12px 0 22px; font-size: 30px; line-height: 40px; color: #262626; }
.add-form { display: flex; gap: 17px; }
.add-form input {
  flex: 1;
  min-width: 0;
  height: 40px;
  padding: 0 11px;
  border: 1px solid #d9d9d9;
  border-radius: 4px;
  font: inherit;
  font-size: 16px;
  color: #595959;
}
.add-form input::placeholder { color: #bfbfbf; }
.add {
  flex: none;
  width: 40px;
  height: 40px;
  padding-bottom: 2px;
  border-radius: 50%;
  background: #007bff;
  justify-content: center;
}
.empty { margin: 13px 0 0; padding: 10px 5px; border-bottom: 1px solid #d9d9d9; }
```
